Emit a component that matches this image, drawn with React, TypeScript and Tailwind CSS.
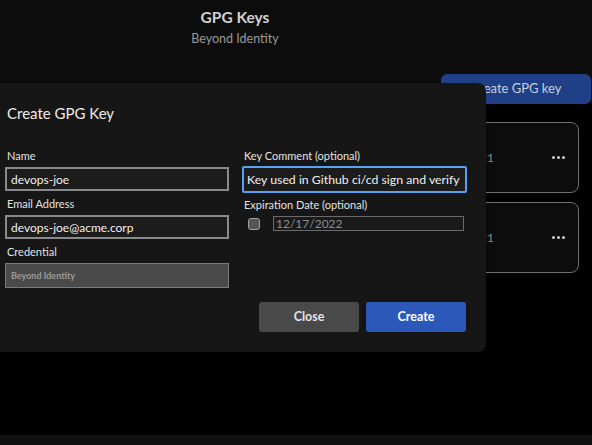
import { useState } from 'react';

const font = { fontFamily: 'Lato, "Noto Sans", sans-serif' };

function KeyCard(props: { date: string }) {
  return (
    <div className="flex h-[71px] items-center rounded-lg border border-[#6f6f6f] bg-[#0c0c0c] pr-[13px]">
      <span className="flex-1 pr-[58px] text-right text-[12px] text-[#8a8a8a]">{props.date}</span>
      <span className="flex gap-[2px]">
        <span className="h-[3px] w-[3px] rounded-full bg-[#cfcfcf]" />
        <span className="h-[3px] w-[3px] rounded-full bg-[#cfcfcf]" />
        <span className="h-[3px] w-[3px] rounded-full bg-[#cfcfcf]" />
      </span>
    </div>
  );
}

function Field(props: { label: string; children: React.ReactNode }) {
  return (
    <div className="flex flex-col">
      <label className="mb-[4px] pl-[2px] text-[11px] leading-[14px] text-[#e2e2e2]">{props.label}</label>
      {props.children}
    </div>
  );
}

function CreateKeyModal() {
  const [name, setName] = useState('devops-joe');
  const [email, setEmail] = useState('devops-joe@acme.corp');
  const [comment, setComment] = useState('Key used in Github ci/cd sign and verify');

  const inputCls =
    'h-[24px] w-[224px] border-2 border-[#8a8a8a] bg-[#1c1c1c] px-[4px] text-[12px] text-[#f0f0f0] outline-none';

  return (
    <div className="absolute left-0 top-[83px] flex h-[269px] w-[486px] flex-col rounded-r-lg bg-[#161616] pl-[5px] pt-[20px] shadow-lg">
      <div className="pl-[2px] text-[15px] leading-[20px] text-[#ececec]">Create GPG Key</div>

      <div className="mt-[26px] flex gap-[13px]">
        <div className="flex flex-col gap-[6px]">
          <Field label="Name">
            <input className={inputCls} value={name} onChange={(e) => setName(e.target.value)} />
          </Field>
          <Field label="Email Address">
            <input className={inputCls} value={email} onChange={(e) => setEmail(e.target.value)} />
          </Field>
          <Field label="Credential">
            <input
              disabled
              className="h-[25px] w-[224px] border border-[#7a7a7a] bg-[#4a4a4a] px-[5px] text-[9px] font-bold text-[#9a9a9a]"
              value="Beyond Identity"
            />
          </Field>
        </div>

        <div className="flex flex-col">
          <Field label="Key Comment (optional)">
            <input
              className="-mt-[1px] h-[27px] w-[225px] rounded-[2px] border-2 border-[#5aa0f0] bg-[#1c1c1c] px-[3px] text-[12.3px] text-[#f0f0f0] outline-none"
              value={comment}
              onChange={(e) => setComment(e.target.value)}
            />
          </Field>
          <div className="mt-[5px]">
            <Field label="Expiration Date (optional)">
              <div className="flex items-center pl-[6px]">
                <span className="h-[12px] w-[12px] rounded-[3px] border border-[#a0a0a0] bg-[#555]" />
                <div className="ml-[13px] flex h-[15px] w-[191px] items-center border border-[#6a6a6a] bg-[#1a1a1a] px-[2px] text-[12px] text-[#8c8c8c]">
                  12/17/2022
                </div>
              </div>
            </Field>
          </div>

          <div className="mt-[71px] flex gap-[7px] pl-[17px]">
            <button className="h-[30px] w-[100px] rounded-[3px] bg-[#494949] text-[12.5px] font-bold text-[#e4e4e4]">
              Close
            </button>
            <button className="h-[30px] w-[100px] rounded-[3px] bg-[#2c59b9] text-[12.5px] font-bold text-white">
              Create
            </button>
          </div>
        </div>
      </div>
    </div>
  );
}

export default function App() {
  return (
    <div className="relative flex h-[445px] w-[592px] flex-col overflow-hidden bg-black" style={font}>
      <header className="flex h-[104px] flex-col bg-[#0c0c0c]">
        <div className="flex w-[470px] flex-col items-center pt-[7px]">
          <div className="text-[15.5px] font-bold leading-[21px] text-[#d2d2d2]">GPG Keys</div>
          <div className="mt-[3px] text-[12.5px] leading-[16px] text-[#9a9a9a]">Beyond Identity</div>
        </div>
        <div className="mt-auto flex justify-end pr-[1px]">
          <button className="h-[30px] w-[150px] rounded-md bg-[#1f3f87] text-[13px] text-[#c8cfdc]">
            Create GPG key
          </button>
        </div>
      </header>

      <main className="flex flex-1 flex-col gap-[9px] pl-[250px] pr-[13px] pt-[18px]">
        <KeyCard date="Created 11/19/2021" />
        <KeyCard date="Created 12/02/2021" />
      </main>

      <footer className="h-[10px] bg-[#111]" />

      <CreateKeyModal />
    </div>
  );
}
